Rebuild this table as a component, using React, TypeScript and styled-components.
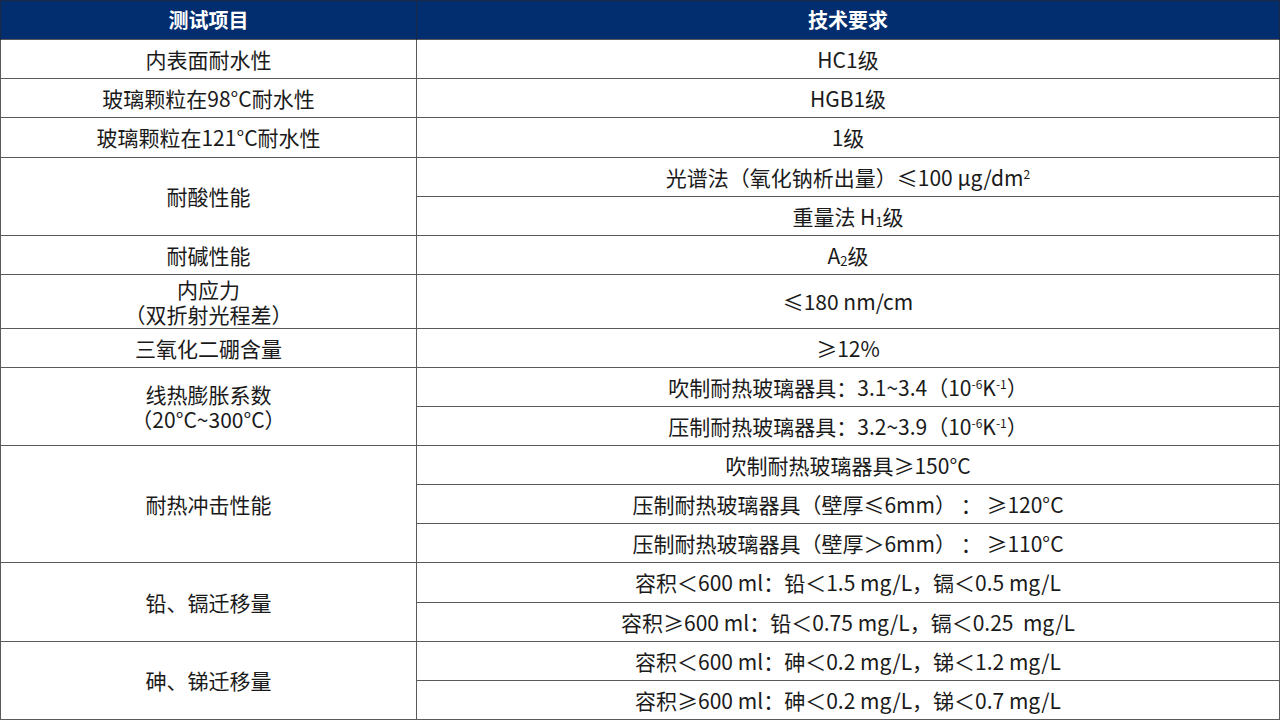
import styled, { createGlobalStyle } from 'styled-components';

const GlobalStyle = createGlobalStyle`
  html, body {
    margin: 0;
    padding: 0;
    background: #ffffff;
  }
  body {
    font-family: "Noto Sans CJK SC", "Noto Sans", sans-serif;
    color: #1a1a1a;
  }
`;

const Table = styled.table`
  width: 1280px;
  table-layout: fixed;
  border-collapse: collapse;
  font-size: 21px;
`;

const HeadRow = styled.tr`
  height: 39px;
`;

const HeadCell = styled.th<{ $w?: number }>`
  width: ${(p) => (p.$w ? `${p.$w}px` : 'auto')};
  padding: 0;
  background-color: #022d6f;
  color: #ffffff;
  font-weight: 700;
  font-size: 20px;
  text-align: center;
  border: 1px solid #1b2a44;
  border-bottom: none;
  line-height: 1;
`;

const Row = styled.tr<{ $h?: number }>`
  height: ${(p) => p.$h ?? 39}px;
`;

const Cell = styled.td`
  padding: 0;
  text-align: center;
  vertical-align: middle;
  border: 1px solid #5a5a5a;
  line-height: 25px;
  white-space: nowrap;
`;

const Line = styled.span`
  display: block;
`;

const Sup = styled.sup`
  font-size: 12px;
  line-height: 0;
  vertical-align: 7px;
`;

const Sub = styled.sub`
  font-size: 13px;
  line-height: 0;
  vertical-align: -2px;
`;

const App = () => {
  return (
    <>
      <GlobalStyle />
      <Table>
        <thead>
          <HeadRow>
            <HeadCell $w={415}>测试项目</HeadCell>
            <HeadCell>技术要求</HeadCell>
          </HeadRow>
        </thead>
        <tbody>
          <Row>
            <Cell>内表面耐水性</Cell>
            <Cell>HC1级</Cell>
          </Row>
          <Row>
            <Cell>玻璃颗粒在98°C耐水性</Cell>
            <Cell>HGB1级</Cell>
          </Row>
          <Row $h={40}>
            <Cell>玻璃颗粒在121°C耐水性</Cell>
            <Cell>1级</Cell>
          </Row>
          <Row>
            <Cell rowSpan={2}>耐酸性能</Cell>
            <Cell>
              光谱法（氧化钠析出量）≤100 μg/dm<Sup>2</Sup>
            </Cell>
          </Row>
          <Row>
            <Cell>
              重量法 H<Sub>1</Sub>级
            </Cell>
          </Row>
          <Row>
            <Cell>耐碱性能</Cell>
            <Cell>
              A<Sub>2</Sub>级
            </Cell>
          </Row>
          <Row $h={54}>
            <Cell>
              <Line>内应力</Line>
              <Line>（双折射光程差）</Line>
            </Cell>
            <Cell>≤180 nm/cm</Cell>
          </Row>
          <Row>
            <Cell>三氧化二硼含量</Cell>
            <Cell>≥12%</Cell>
          </Row>
          <Row>
            <Cell rowSpan={2}>
              <Line>线热膨胀系数</Line>
              <Line>（20°C~300°C）</Line>
            </Cell>
            <Cell>
              吹制耐热玻璃器具：3.1~3.4（10<Sup>-6</Sup>K<Sup>-1</Sup>）
            </Cell>
          </Row>
          <Row>
            <Cell>
              压制耐热玻璃器具：3.2~3.9（10<Sup>-6</Sup>K<Sup>-1</Sup>）
            </Cell>
          </Row>
          <Row>
            <Cell rowSpan={3}>耐热冲击性能</Cell>
            <Cell>吹制耐热玻璃器具≥150°C</Cell>
          </Row>
          <Row>
            <Cell>压制耐热玻璃器具（壁厚≤6mm） ： ≥120°C</Cell>
          </Row>
          <Row>
            <Cell>压制耐热玻璃器具（壁厚＞6mm） ： ≥110°C</Cell>
          </Row>
          <Row $h={40}>
            <Cell rowSpan={2}>铅、镉迁移量</Cell>
            <Cell>容积＜600 ml：铅＜1.5 mg/L，镉＜0.5 mg/L</Cell>
          </Row>
          <Row>
            <Cell>容积≥600 ml：铅＜0.75 mg/L，镉＜0.25{'\u00a0'} mg/L</Cell>
          </Row>
          <Row>
            <Cell rowSpan={2}>砷、锑迁移量</Cell>
            <Cell>容积＜600 ml：砷＜0.2 mg/L，锑＜1.2 mg/L</Cell>
          </Row>
          <Row>
            <Cell>容积≥600 ml：砷＜0.2 mg/L，锑＜0.7 mg/L</Cell>
          </Row>
        </tbody>
      </Table>
    </>
  );
};

export default App;
